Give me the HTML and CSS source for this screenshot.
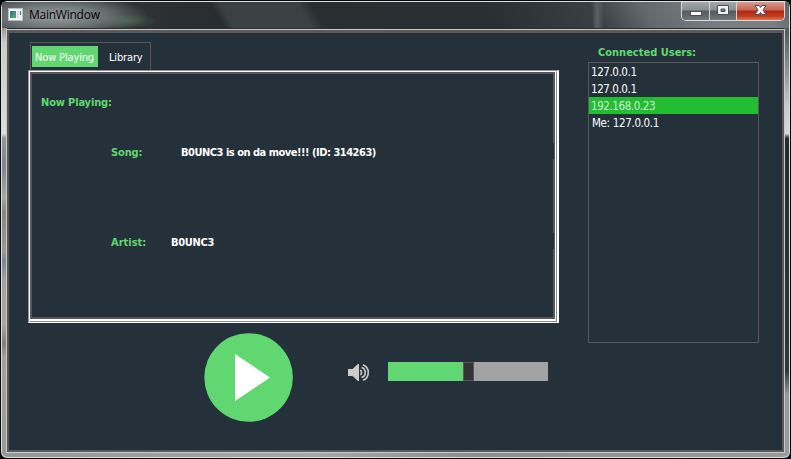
FILE: index.html
```html
<!DOCTYPE html>
<html lang="en">
<head>
<meta charset="utf-8">
<title>MainWindow</title>
<link rel="stylesheet" href="styles.css">
</head>
<body>
<div class="window">
  <header class="titlebar">
    <svg class="app-icon" width="15" height="13" viewBox="0 0 15 13">
      <defs><linearGradient id="g" x1="0" y1="0" x2="1" y2="1"><stop offset="0" stop-color="#3c6ca0"/><stop offset="1" stop-color="#58b060"/></linearGradient></defs>
      <rect x=".5" y=".5" width="14" height="12" fill="#f4f6f6" stroke="#b9c0c3"/>
      <rect x="2" y="3" width="6" height="7" fill="url(#g)"/>
      <rect x="9" y="3" width="2" height="7" fill="#dce0e2"/>
      <rect x="12" y="3" width="1" height="4" fill="#3c6ca0"/>
    </svg>
    <h1 class="title">MainWindow</h1>
    <div class="controls">
      <button class="control minimize" aria-label="Minimize"><svg width="27" height="18"><rect x="8.500" y="9.500" width="11" height="4" fill="#fff" stroke="#4b4c5c"/></svg></button>
      <button class="control maximize" aria-label="Maximize"><svg width="26" height="18"><path d="M7.500 3.500h11v9h-11z M11 7v2.500h4v-2.500z" fill="#f2f2f2" fill-rule="evenodd" stroke="#4b4c5c"/></svg></button>
      <button class="control close" aria-label="Close"><svg width="47" height="18"><path d="M18 3.500h4l1.500 2 1.500-2h4l-3 4.500 3 4.500h-4l-1.500-2-1.500 2h-4l3-4.500z" fill="#f6f6f6" stroke="#554a58"/></svg></button>
    </div>
  </header>
  <main class="client">
    <section class="player">
      <nav class="tabs"><span class="tab active">Now Playing</span><span class="tab">Library</span></nav>
      <div class="frame"><div class="bevel">
        <div class="panel">
          <h2 class="heading now">Now Playing:</h2>
          <div class="field song"><span class="label">Song:</span><span class="value long">B0UNC3 is on da move!!! (ID: 314263)</span></div>
          <div class="field artist"><span class="label">Artist:</span><span class="value">B0UNC3</span></div>
        </div>
      </div></div>
      <div class="playback">
        <svg class="play" width="90" height="90" viewBox="0 0 90 90"><circle cx="44.600" cy="44.500" r="44.300" fill="#60d770"/><path d="M31 21v47L66 44.500z" fill="#fff"/></svg>
        <svg class="speaker" width="22" height="20" viewBox="0 0 22 20"><path d="M0 6h4.500L10 1h1v17h-1l-5.500-5H0z" fill="#ccc"/><path d="M12 7.300a2.300 2.300 0 0 1 0 4.400 M13.500 4.500a5.200 5.200 0 0 1 0 10 M15 1.700a8.400 8.400 0 0 1 0 15.600" fill="none" stroke="#ccc" stroke-width="1.600"/></svg>
        <div class="slider"><span class="filled"></span><span class="handle"></span><span class="rest"></span></div>
      </div>
    </section>
    <aside class="users">
      <h2 class="heading users-title">Connected Users:</h2>
      <ul class="user-list"><li>127.0.0.1</li><li>127.0.0.1</li><li class="selected">192.168.0.23</li><li class="me">Me: 127.0.0.1</li></ul>
    </aside>
  </main>
</div>
</body>
</html>
```

FILE: styles.css
```css
* { box-sizing: border-box; }
body { margin: 0; background: #08090b; font-family: "DejaVu Sans Condensed", "DejaVu Sans", sans-serif; font-stretch: condensed; font-size: 11px; color: #fff; }
h1, h2, ul { margin: 0; padding: 0; font-size: inherit; list-style: none; }
svg { display: block; }
.window {
  width: 791px; height: 459px; border: 1px solid #08090b; border-radius: 7px; padding: 1px 6px 6px;
  box-shadow: inset 0 0 0 1px #dedede;
  background:
    linear-gradient(90deg, #969696, #a8a8a8 40%, #8d8d8d 60%, #9a9a9a) 0 100% / 100% 6px no-repeat,
    linear-gradient(#74797c 0, #555b5f 7%, #c8c9cb 23%, #d8d8d8 29%, #242b31 30%, #30373c 81%, #999 86%) 100% 0 / 6px 100% no-repeat,
    linear-gradient(#333 0, #cecac8 9%, #e0ddd8 29%, #979395 30%, #7e8592 36%, #aaa5a3 43%, #85877f 46%, #9b9793 55%, #718b99 57%, #a5a09e 61%, #aaa5a3 71%, #817f6c 75%, #a5a09e 78%, #9b9793) 0 0 / 6px 100% no-repeat,
    #2a2e32;
}
.titlebar {
  height: 26px; display: flex; align-items: flex-start; margin: 0 -5px; padding-left: 6px;
  background:
    radial-gradient(ellipse 92px 22px at 54px 14px, #9ba1a1 0, rgba(130,137,136,.75) 50%, transparent 100%),
    radial-gradient(ellipse 30px 7px at 126px 19px, #3c5945, transparent),
    linear-gradient(90deg, transparent 590px, #5b6163 595px, transparent 602px),
    linear-gradient(60deg, #404448 0, #2c2f32 150px, #2a2d30 193px, transparent 201px),
    linear-gradient(60deg, #3b4042 268px, #292e31 280px, #2a2f33 430px, #3a3f43 520px, #62686b 565px, #777d80 620px, #797f82 670px, #555b60 700px);
}
.app-icon { margin-top: 6px; }
.title { margin: 4px 0 0 6px; font: 12px/18px "Open Sans", sans-serif; letter-spacing: -.25px; color: #000; }
.controls { display: flex; margin: -1px 4px 0 auto; width: 104px; height: 20px; border: 1px solid #d6d8d9; border-top-color: #e8e8e8; border-radius: 0 0 5px 5px; overflow: hidden; }
.control { padding: 0; border: 0; border-right: 1px solid #d2d4d5; background: linear-gradient(#a5a9ab 0, #888d90 45%, #535a5f 50%, #70777b); height: 18px; flex: 0 0 28px; }
.control.maximize { flex-basis: 27px; }
.control.close { flex: 1; border: 0; background: linear-gradient(#d79b91 0, #c66452 45%, #ab2812 50%, #c43d20 80%, #db7853); }
.client { height: 422px; border: 2px solid #5c5a58; border-top-width: 3px; background: #25313a; box-shadow: 0 0 0 1px #cacaca; margin-top: 2px; display: flex; padding: 9px 23px 0 19px; }
.player { width: 531px; }
.tabs { display: flex; width: 121px; height: 28px; margin-left: 2px; border: 1px solid #58585a; border-bottom: 0; padding: 3px 0 0 1px; }
.tab { height: 21px; line-height: 23px; padding: 0 3px; white-space: nowrap; letter-spacing: -.15px; }
.tab.active { width: 66px; background: #60d770; margin-right: 8px; }
.frame { width: 531px; height: 253px; border: solid; border-width: 1px 2px 1px 1px; border-color: #9391a0 #fff #fff #9391a0; }
.bevel { height: 251px; border: 1px solid; border-color: #fff #8c8991 #8c8991 #fff; padding: 0 1px 2px 0; background: #fff; }
.panel { height: 247px; padding: 21px 0 0 9px; border: 2px solid #58585a; background: #25313a; }
.heading, .label { color: #60d770; font-weight: bold; line-height: 16px; }
.now { letter-spacing: -.15px; }
.field { display: flex; margin: 0 -1px 0 70px; height: 16px; line-height: 20px; font-weight: bold; white-space: nowrap; background: #25313a; }
.label { line-height: 20px; }
.song { margin-top: 32px; }
.song .label { width: 70px; letter-spacing: -.15px; }
.artist { margin-top: 74px; }
.artist .label { width: 60px; }
.value { letter-spacing: -.3px; }
.value.long { letter-spacing: -.49px; }
.playback { display: flex; padding-left: 176px; padding-top: 10px; }
.speaker { margin: 30px 0 0 54px; }
.slider { display: flex; width: 160px; height: 19px; margin: 29px 0 0 18px; }
.filled { width: 75px; background: #60d770; }
.handle { width: 11px; background: #333; border: 1px solid #58585a; }
.rest { flex: 1; background: #a2a2a2; }
.users { width: 171px; margin-left: 29px; padding-top: 3px; }
.users-title { margin-left: 10px; }
.user-list { height: 281px; margin-top: 1px; border: 1px solid #58585a; font-size: 11.5px; letter-spacing: -.42px; }
.user-list li { height: 17px; line-height: 18px; padding-left: 2px; }
.user-list .selected { background: #22bd33; color: #cdebd0; }
.user-list .me { padding-left: 3px; letter-spacing: -.34px; }
```
